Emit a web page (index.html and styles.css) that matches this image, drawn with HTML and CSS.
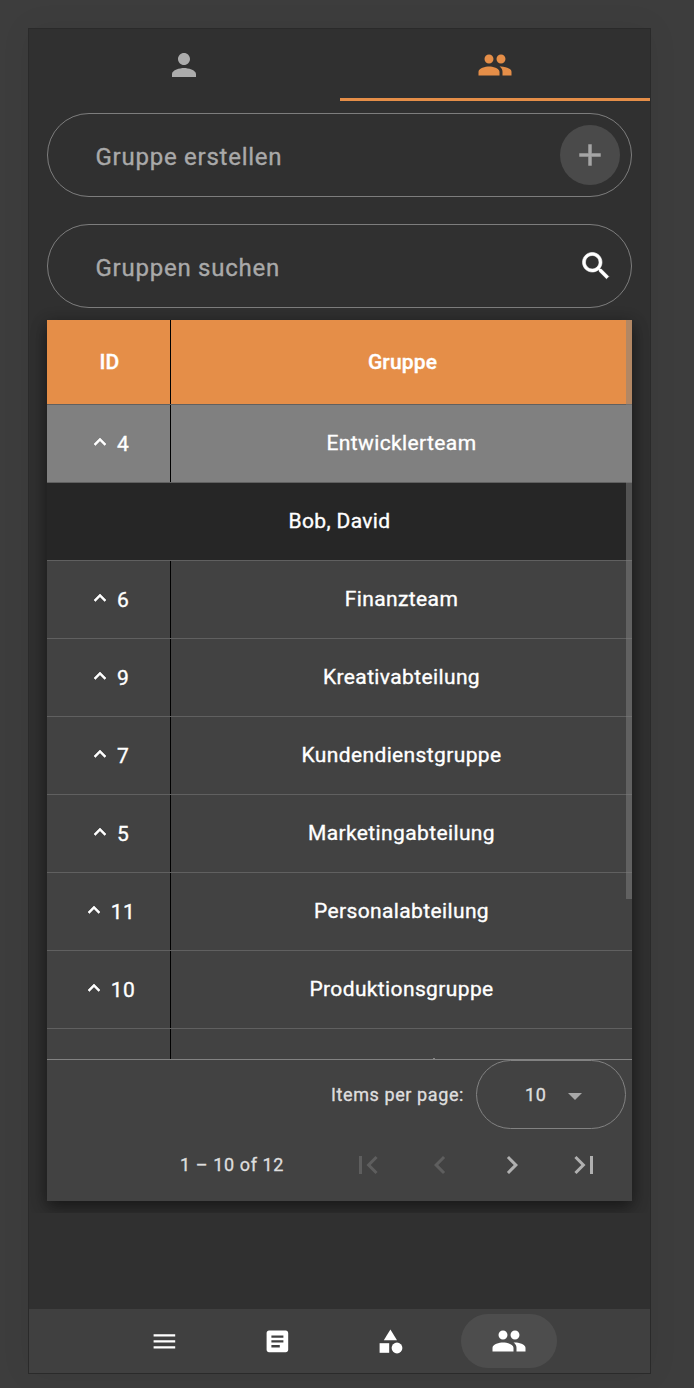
FILE: index.html
```
<!DOCTYPE html>
<html lang="de">
<head>
<meta charset="utf-8">
<title>Gruppen</title>
<link rel="stylesheet" href="styles.css">
</head>
<body>
<main class="phone">
  <nav class="tabs">
    <a class="tab"><svg class="icon" viewBox="0 0 24 24"><path d="M12 12c2.21 0 4-1.79 4-4s-1.79-4-4-4-4 1.79-4 4 1.79 4 4 4zm0 2c-2.67 0-8 1.34-8 4v2h16v-2c0-2.66-5.33-4-8-4z"/></svg></a>
    <a class="tab active"><svg class="icon" viewBox="0 0 24 24"><path d="M16 11c1.66 0 2.99-1.34 2.99-3S17.66 5 16 5s-3 1.34-3 3 1.34 3 3 3zm-8 0c1.66 0 2.99-1.34 2.99-3S9.66 5 8 5 5 6.340 5 8s1.340 3 3 3zm0 2c-2.330 0-7 1.170-7 3.500V19h14v-2.500c0-2.330-4.670-3.500-7-3.500zm8 0c-.29 0-.62.02-.97.050 1.160.84 1.970 1.970 1.970 3.450V19h6v-2.500c0-2.330-4.670-3.500-7-3.500z"/></svg></a>
  </nav>
  <section class="content">
    <div class="field">
      <span class="label">Gruppe erstellen</span>
      <button class="add"><svg class="icon" viewBox="0 0 24 24"><path d="M19 13h-6v6h-2v-6H5v-2h6V5h2v6h6v2z"/></svg></button>
    </div>
    <div class="field search">
      <span class="label">Gruppen suchen</span>
      <svg class="icon" viewBox="0 0 24 24"><path d="M15.500 14h-.79l-.28-.27C15.410 12.590 16 11.110 16 9.500 16 5.910 13.090 3 9.500 3S3 5.910 3 9.500 5.910 16 9.500 16c1.610 0 3.090-.59 4.230-1.570l.27.28v.79l5 4.990L20.490 19l-4.990-5zm-6 0C7.010 14 5 11.990 5 9.500S7.010 5 9.500 5 14 7.010 14 9.500 11.990 14 9.500 14z"/></svg>
    </div>
    <div class="card">
      <div class="table">
        <div class="row head"><span class="id">ID</span><span class="name">Gruppe</span></div>
        <div class="row selected"><span class="id"><svg class="chev" viewBox="0 0 24 24"><path d="M7.410 15.410L12 10.830l4.590 4.580L18 14l-6-6-6 6z"/></svg>4</span><span class="name">Entwicklerteam</span></div>
        <div class="row detail"><span class="name">Bob, David</span></div>
        <div class="row"><span class="id"><svg class="chev" viewBox="0 0 24 24"><path d="M7.410 15.410L12 10.830l4.590 4.580L18 14l-6-6-6 6z"/></svg>6</span><span class="name">Finanzteam</span></div>
        <div class="row"><span class="id"><svg class="chev" viewBox="0 0 24 24"><path d="M7.410 15.410L12 10.830l4.590 4.580L18 14l-6-6-6 6z"/></svg>9</span><span class="name">Kreativabteilung</span></div>
        <div class="row"><span class="id"><svg class="chev" viewBox="0 0 24 24"><path d="M7.410 15.410L12 10.830l4.590 4.580L18 14l-6-6-6 6z"/></svg>7</span><span class="name">Kundendienstgruppe</span></div>
        <div class="row"><span class="id"><svg class="chev" viewBox="0 0 24 24"><path d="M7.410 15.410L12 10.830l4.590 4.580L18 14l-6-6-6 6z"/></svg>5</span><span class="name">Marketingabteilung</span></div>
        <div class="row"><span class="id"><svg class="chev" viewBox="0 0 24 24"><path d="M7.410 15.410L12 10.830l4.590 4.580L18 14l-6-6-6 6z"/></svg>11</span><span class="name">Personalabteilung</span></div>
        <div class="row"><span class="id"><svg class="chev" viewBox="0 0 24 24"><path d="M7.410 15.410L12 10.830l4.590 4.580L18 14l-6-6-6 6z"/></svg>10</span><span class="name">Produktionsgruppe</span></div>
        <div class="row partial"><span class="id"></span><span class="name"><i class="tip"></i></span></div>
        <div class="thumb"></div>
      </div>
      <footer class="paginator">
        <div class="size"><span class="size-label">Items per page:</span><div class="select"><span>10</span><i class="caret"></i></div></div>
        <div class="range">
          <span class="range-label">1 – 10 of 12</span>
          <button class="page off"><svg class="icon" viewBox="0 0 24 24"><path d="M18.410 16.590L13.820 12l4.590-4.590L17 6l-6 6 6 6zM6 6h2v12H6z"/></svg></button>
          <button class="page off"><svg class="icon" viewBox="0 0 24 24"><path d="M15.410 7.410L14 6l-6 6 6 6 1.410-1.410L10.830 12z"/></svg></button>
          <button class="page"><svg class="icon" viewBox="0 0 24 24"><path d="M10 6L8.590 7.410 13.170 12l-4.580 4.590L10 18l6-6z"/></svg></button>
          <button class="page"><svg class="icon" viewBox="0 0 24 24"><path d="M5.590 7.410L10.180 12l-4.590 4.590L7 18l6-6-6-6zM16 6h2v12h-2z"/></svg></button>
        </div>
      </footer>
    </div>
  </section>
  <nav class="bottom">
    <a class="item"><svg class="small" viewBox="0 0 24 24"><path d="M3 18h18v-2H3v2zm0-5h18v-2H3v2zm0-7v2h18V6H3z"/></svg></a>
    <a class="item"><svg class="small" viewBox="0 0 24 24"><path d="M19 3H5c-1.100 0-2 .9-2 2v14c0 1.100.9 2 2 2h14c1.100 0 2-.9 2-2V5c0-1.100-.9-2-2-2zm-5 14H7v-2h7v2zm3-4H7v-2h10v2zm0-4H7V7h10v2z"/></svg></a>
    <a class="item"><svg class="small" viewBox="0 0 24 24"><path d="M12 2l-5.500 9h11z"/><circle cx="17.500" cy="17.500" r="4.500"/><path d="M3 13.500h8v8H3z"/></svg></a>
    <a class="item current"><svg class="icon" viewBox="0 0 24 24"><path d="M16 11c1.660 0 2.990-1.340 2.990-3S17.660 5 16 5s-3 1.340-3 3 1.340 3 3 3zm-8 0c1.660 0 2.990-1.340 2.990-3S9.660 5 8 5 5 6.340 5 8s1.340 3 3 3zm0 2c-2.330 0-7 1.170-7 3.500V19h14v-2.500c0-2.330-4.670-3.500-7-3.500zm8 0c-.29 0-.62.02-.97.050 1.160.84 1.970 1.970 1.970 3.450V19h6v-2.500c0-2.330-4.670-3.500-7-3.500z"/></svg></a>
  </nav>
</main>
</body>
</html>
```
FILE: styles.css
```
* { box-sizing: border-box; }
body {
  margin: 0;
  padding: 28px;
  height: 1388px;
  overflow: hidden;
  background: #3d3d3d;
  color: #fff;
  font-family: Roboto, "Liberation Sans", sans-serif;
  -webkit-text-stroke: .35px currentColor;
}
button { border: 0; padding: 0; background: none; color: inherit; }
svg { display: block; flex: none; fill: currentColor; }
.icon { width: 36px; height: 36px; }
.phone {
  width: 623px;
  height: 1346px;
  display: flex;
  flex-direction: column;
  border: 1px solid #2a2a2a;
  background: #303030;
  box-shadow: 0 0 30px rgba(0, 0, 0, .06);
}
.tabs { display: flex; height: 72px; }
.tab {
  width: 311px;
  display: flex;
  align-items: center;
  justify-content: center;
  color: #acacac;
  padding-right: 1px;
}
.tab.active { width: 310px; color: #e58e48; border-bottom: 3px solid #e58e48; padding: 3px 0 0; }
.content {
  height: 1112px;
  padding: 12px 18px;
  overflow: hidden;
}
.field {
  display: flex;
  align-items: center;
  justify-content: space-between;
  height: 84px;
  padding: 2px 11px 0 47.5px;
  margin-bottom: 27px;
  border: 1px solid #7d7d7d;
  border-radius: 42px;
}
.field.search { margin-bottom: 12px; padding-right: 17px; }
.search .icon { margin-top: -2px; stroke: currentColor; stroke-width: .4; }
.label { color: #a9a9a9; font-size: 24px; line-height: 36px; letter-spacing: .75px; padding-top: 1px; }
.add {
  display: flex;
  align-items: center;
  justify-content: center;
  width: 60px;
  height: 60px;
  margin-top: -2px;
  border-radius: 50%;
  background: #4a4a4a;
  color: #a5a5a5;
}
.add .icon { stroke: currentColor; stroke-width: .3; }
.card {
  background: #424242;
  box-shadow: 0 3px 15px rgba(0, 0, 0, .3), 0 8px 16px rgba(0, 0, 0, .3);
}
.table { position: relative; height: 739px; overflow: hidden; }
.row {
  display: flex;
  height: 78px;
  border-bottom: 1px solid #606060;
  font-size: 21px;
  letter-spacing: .375px;
}
.head { height: 85px; background: #e58e48; font-weight: 500; letter-spacing: .15px; }
.selected { background: #808080; }
.detail { background: #262626; }
.partial { height: 30px; border-bottom: 0; }
.id {
  display: flex;
  align-items: center;
  justify-content: center;
  gap: 5px;
  width: 124px;
  border-right: 1px solid #000;
}
.name { flex: 1; display: flex; align-items: center; justify-content: center; padding-bottom: 2px; }
.head .id { padding-left: 2px; }
.head .name { padding: 0 0 0 2px; }
.partial .name { align-items: flex-end; padding: 0 0 0 64px; }
.tip { width: 2px; height: 1px; background: #858585; }
.chev { width: 24px; height: 24px; margin-top: -3px; stroke: currentColor; stroke-width: .6; }
.thumb {
  position: absolute;
  top: 0;
  right: 0;
  width: 6px;
  height: 579px;
  background: rgba(128, 128, 128, .5);
}
.paginator {
  height: 142px;
  border-top: 1px solid #828282;
  color: #dedede;
  font-size: 18px;
  letter-spacing: .6px;
}
.size { display: flex; align-items: center; justify-content: flex-end; padding-right: 6px; gap: 12px; }
.select {
  display: flex;
  align-items: center;
  gap: 21.5px;
  width: 150px;
  height: 69px;
  padding-left: 48px;
  border: 1px solid #828282;
  border-radius: 35px;
}
.caret {
  margin-top: 4px;
  border: 7.5px solid transparent;
  border-top-color: #a8a8a8;
  border-bottom: 0;
}
.range { display: flex; align-items: center; justify-content: flex-end; height: 72px; padding-right: 12px; }
.range-label { margin-right: 48px; padding-bottom: 2px; }
.page { display: flex; align-items: center; justify-content: center; width: 72px; height: 72px; color: #b0b0b0; }
.page.off { color: #5e5e5e; }
.bottom {
  display: flex;
  align-items: center;
  justify-content: center;
  gap: 17px;
  flex: 1;
  margin-top: 96px;
  padding-right: 7px;
  background: #404040;
}
.item { display: flex; align-items: center; justify-content: center; width: 96px; height: 54px; border-radius: 27px; }
.item.current { background: #4d4d4d; margin-left: 6px; }
.small { width: 28.8px; height: 28.8px; margin-left: 1px; }
```
